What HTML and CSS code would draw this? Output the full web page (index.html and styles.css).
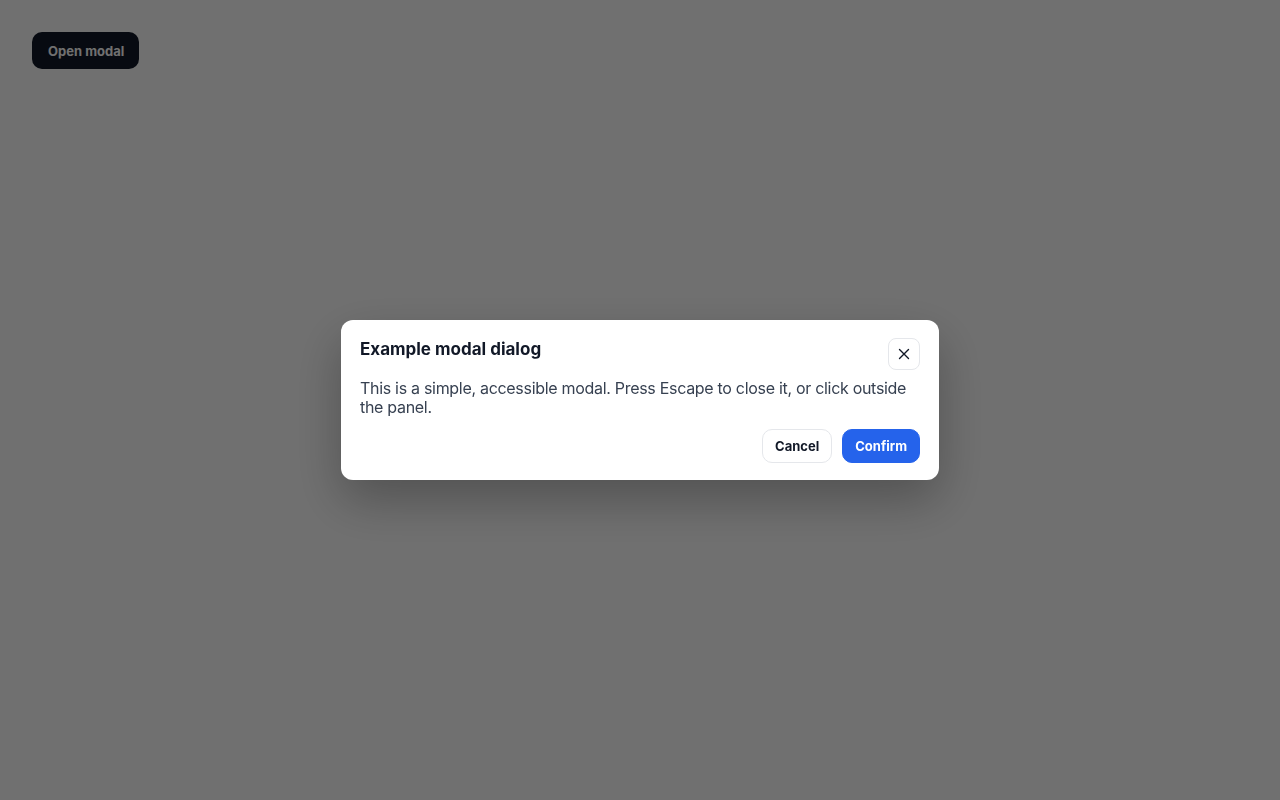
FILE: index.html
```html
<!DOCTYPE html>
<html lang="en">
<head>
<meta charset="utf-8">
<title>Modal</title>
<link rel="stylesheet" href="styles.css">
</head>
<body>
<main class="page">
  <button class="open-btn" type="button">Open modal</button>
</main>
<div class="overlay">
  <div class="modal" role="dialog" aria-modal="true" aria-labelledby="modal-title">
    <div class="modal-header">
      <h2 id="modal-title" class="modal-title">Example modal dialog</h2>
      <button class="close-btn" type="button" aria-label="Close">
        <svg width="12" height="12" viewBox="0 0 12 12" fill="none" stroke="#111827" stroke-width="1.4" stroke-linecap="round"><path d="M1.5 1.5L10.5 10.5M10.5 1.5L1.5 10.5"/></svg>
      </button>
    </div>
    <p class="modal-text">This is a simple, accessible modal. Press Escape to close it, or click outside the panel.</p>
    <div class="modal-footer">
      <button class="btn btn-secondary" type="button">Cancel</button>
      <button class="btn btn-primary" type="button">Confirm</button>
    </div>
  </div>
</div>
</body>
</html>
```
FILE: styles.css
```css
* { box-sizing: border-box; }
html, body { margin: 0; height: 100%; }
body {
  font-family: Inter, "Liberation Sans", sans-serif;
  background: #ffffff;
  color: #111827;
}
.page { padding: 32px; }
.open-btn {
  font-family: inherit;
  font-size: 13px;
  font-weight: 700;
  height: 37px;
  padding: 0 15px 0 16px;
  border: none;
  border-radius: 10px;
  background: #111827;
  color: #ffffff;
}
.overlay {
  position: fixed;
  inset: 0;
  background: rgba(0, 0, 0, 0.56);
  display: flex;
  align-items: center;
  justify-content: center;
}
.modal {
  width: 598px;
  background: #ffffff;
  border-radius: 12px;
  padding: 18px 19px 17px 19px;
  box-shadow: 0 20px 50px rgba(0, 0, 0, 0.28);
}
.modal-header {
  display: flex;
  align-items: flex-start;
  justify-content: space-between;
}
.modal-title {
  margin: 1px 0 0 0;
  font-size: 17px;
  font-weight: 700;
  line-height: 20px;
  color: #111827;
}
.close-btn {
  width: 32px;
  height: 32px;
  display: flex;
  align-items: center;
  justify-content: center;
  padding: 0;
  background: #ffffff;
  border: 1px solid #e5e7eb;
  border-radius: 8px;
}
.modal-text {
  margin: 9px 0 13px 0;
  font-size: 16px;
  line-height: 18.4px;
  letter-spacing: -0.3px;
  color: #374151;
}
.modal-footer {
  display: flex;
  justify-content: flex-end;
  gap: 10px;
}
.btn {
  font-family: inherit;
  font-size: 13px;
  font-weight: 700;
  height: 34px;
  padding: 0 12px;
  border-radius: 10px;
}
.btn-secondary {
  background: #ffffff;
  border: 1px solid #e5e7eb;
  color: #111827;
}
.btn-primary {
  background: #2563eb;
  border: 1px solid #2563eb;
  color: #ffffff;
}
```
